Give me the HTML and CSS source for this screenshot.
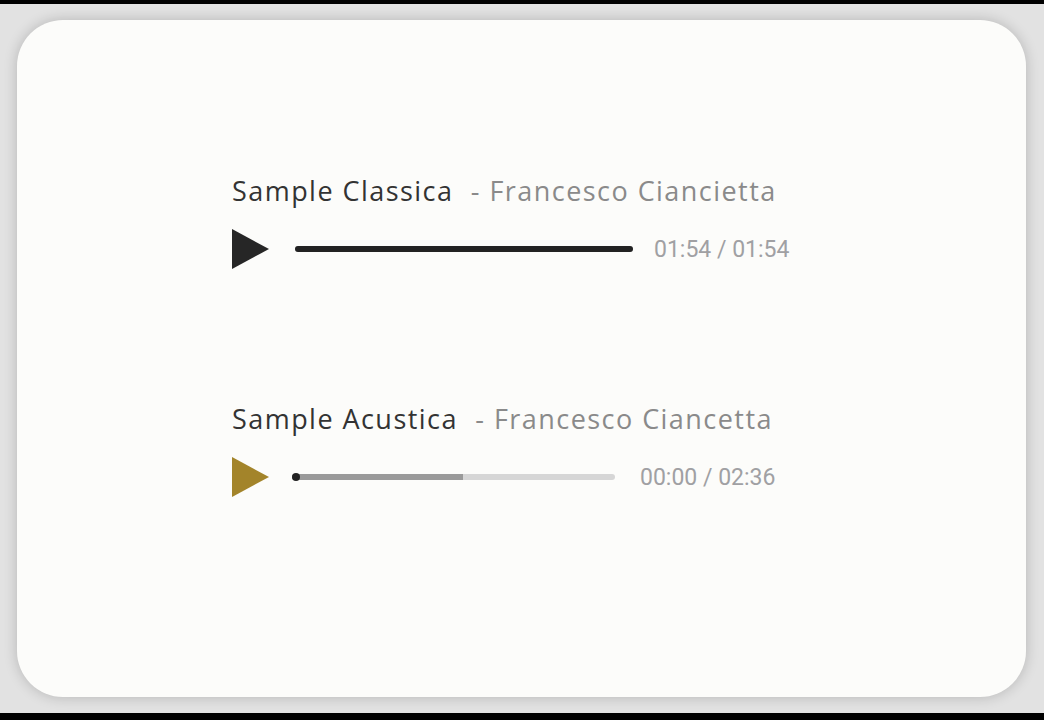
FILE: index.html
```html
<!DOCTYPE html>
<html lang="it">
<head>
    <meta charset="UTF-8">
    <meta name="viewport" content="width=device-width, initial-scale=1.0">
    <title>Samples</title>
    <link rel="stylesheet" href="styles.css">
</head>
<body>
    <div class="screen">
        <div class="card">
            <div class="track">
                <p class="track-title">Sample Classica <span class="artist">- Francesco Ciancietta</span></p>
                <div class="player">
                    <svg class="play" width="37" height="40" viewBox="0 0 37 40"><polygon points="0,0 37,20 0,40" fill="#262626"/></svg>
                    <div class="bar bar-long">
                        <div class="bar-fill" style="width: 100%;"></div>
                    </div>
                    <span class="time">01:54 / 01:54</span>
                </div>
            </div>

            <div class="track">
                <p class="track-title">Sample Acustica <span class="artist">- Francesco Ciancetta</span></p>
                <div class="player">
                    <svg class="play" width="37" height="40" viewBox="0 0 37 40"><polygon points="0,0 37,20 0,40" fill="#a3842a"/></svg>
                    <div class="bar bar-short">
                        <div class="bar-buffer" style="width: 53%;"></div>
                        <span class="thumb"></span>
                    </div>
                    <span class="time">00:00 / 02:36</span>
                </div>
            </div>
        </div>
    </div>
</body>
</html>
```

FILE: styles.css
```css
body {
    margin: 0;
    background-color: #000;
}
.screen {
    height: 720px;
    box-sizing: border-box;
    border-top: 4px solid #000;
    border-bottom: 7px solid #000;
    background-color: #e2e2e2;
    padding: 16px 18px 16px 17px;
    display: flex;
}
.card {
    flex: 1;
    background-color: #fcfcfa;
    border-radius: 46px;
    box-shadow: 0 0 14px rgba(0, 0, 0, 0.2);
    padding: 153px 0 0 215px;
    display: flex;
    flex-direction: column;
    gap: 132px;
}
.track-title {
    margin: 0 0 21px;
    font-family: "Open Sans", "Liberation Sans", sans-serif;
    font-size: 27px;
    line-height: 35px;
    letter-spacing: 1.45px;
    color: #333;
}
.artist {
    color: #8a8a8a;
    margin-left: 9px;
}
.player {
    display: flex;
    align-items: center;
    height: 40px;
}
.play {
    display: block;
    flex: none;
}
.bar {
    position: relative;
    height: 6px;
    border-radius: 3px;
    background-color: #d6d6d6;
}
.bar-long {
    width: 338px;
    margin: 0 21px 0 26px;
}
.bar-short {
    width: 323px;
    margin: 0 25px 0 23px;
}
.bar-fill {
    height: 100%;
    border-radius: 3px;
    background-color: #222;
}
.bar-buffer {
    height: 100%;
    border-radius: 3px 0 0 3px;
    background-color: #9a9a9a;
}
.thumb {
    position: absolute;
    left: 0;
    top: -1px;
    width: 8px;
    height: 8px;
    border-radius: 50%;
    background-color: #222;
}
.time {
    font-family: Roboto, "Liberation Sans", sans-serif;
    font-size: 23px;
    color: #a0a0a3;
}
```
